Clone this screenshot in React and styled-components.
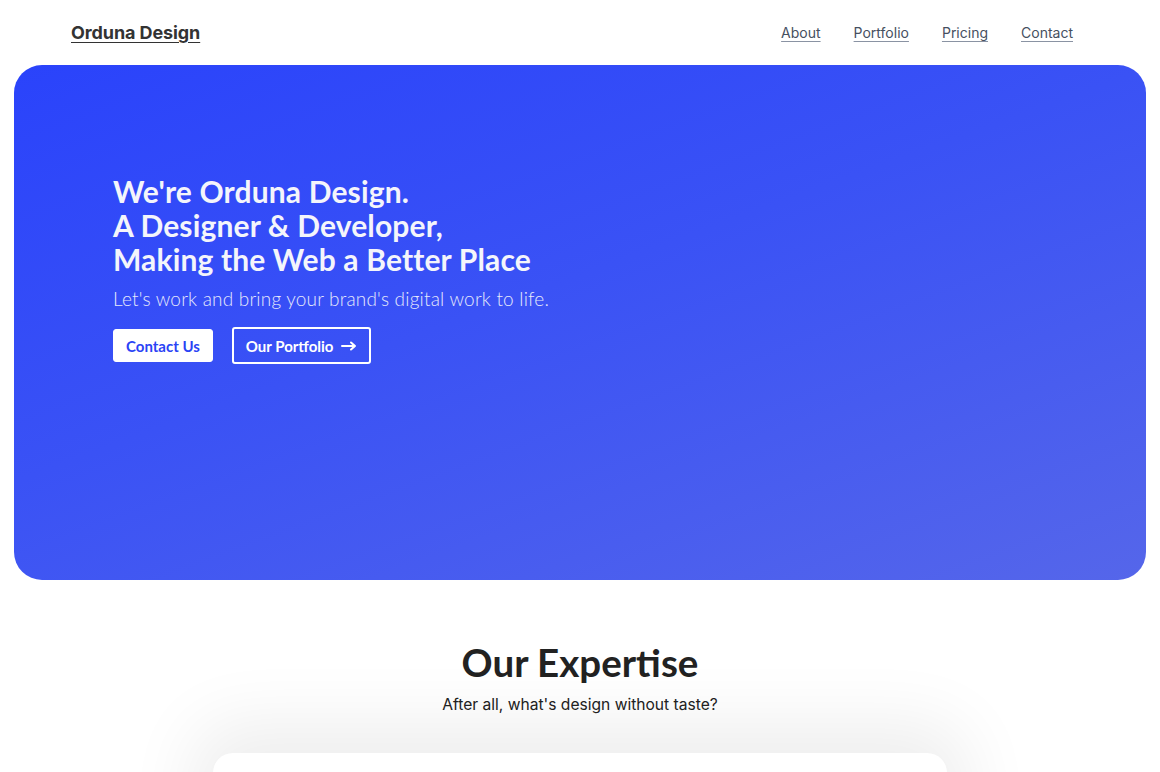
import React from 'react'
import styled, { createGlobalStyle } from 'styled-components'

const GlobalStyle = createGlobalStyle`
    html, body {
        margin: 0;
        padding: 0;
        background: #fff;
        font-family: Inter, "Liberation Sans", sans-serif;
    }
    body {
        overflow: hidden;
    }
`

const Page = styled.div`
    width: 1160px;
    min-height: 772px;
`

const Header = styled.header`
    height: 65px;
    display: flex;
    align-items: center;
    justify-content: space-between;
    padding: 0 87px 0 71px;
    box-sizing: border-box;
`

const Logo = styled.a`
    font-family: Inter, "Liberation Sans", sans-serif;
    font-size: 18px;
    font-weight: 700;
    color: #333;
    text-decoration: underline;
    text-underline-offset: 3px;
    letter-spacing: -0.1px;
`

const Nav = styled.nav`
    display: flex;
    gap: 33px;
`

const NavLink = styled.a`
    font-size: 14px;
    color: #46505f;
    text-decoration: underline;
    text-underline-offset: 3px;
    text-decoration-color: #8a93a3;
`

const Hero = styled.section`
    margin: 0 14px;
    height: 515px;
    border-radius: 28px;
    background: linear-gradient(160deg, #2a43fb 0%, #3a52f5 45%, #5566ea 100%);
    display: flex;
    flex-direction: column;
    justify-content: flex-start;
    padding: 109px 0 0 99px;
    box-sizing: border-box;
    color: #fff;
`

const Headline = styled.h1`
    margin: 0;
    font-family: Lato, "Liberation Sans", sans-serif;
    font-size: 30px;
    line-height: 34px;
    font-weight: 700;
    color: #f4f5fb;
    letter-spacing: 0.15px;
`

const Lead = styled.p`
    margin: 11px 0 17px;
    font-family: Lato, "Liberation Sans", sans-serif;
    font-size: 19px;
    font-weight: 300;
    color: #e6e9fb;
    letter-spacing: 0.2px;
`

const Actions = styled.div`
    display: flex;
    align-items: center;
    gap: 19px;
`

const Button = styled.a`
    display: inline-flex;
    align-items: center;
    gap: 8px;
    box-sizing: border-box;
    font-family: Lato, "Liberation Sans", sans-serif;
    font-weight: 700;
    font-size: 15px;
    border-radius: 3px;
    cursor: pointer;
    ${ ({ outline }) => outline ? `
        height: 37px;
        padding: 0 12px;
        border: 2px solid #fff;
        color: #fff;
        background: transparent;
    ` : `
        height: 33px;
        padding: 0 12px;
        background: #fff;
        color: #2a43f5;
        border: 1px solid #fff;
    ` }
`

const Expertise = styled.section`
    display: flex;
    flex-direction: column;
    align-items: center;
    padding-top: 58px;
`

const Title = styled.h2`
    margin: 0;
    font-family: Lato, "Liberation Sans", sans-serif;
    font-size: 38.5px;
    font-weight: 700;
    color: #222;
    line-height: 48px;
`

const Subtitle = styled.p`
    margin: 9px 0 0;
    font-size: 15.6px;
    color: #222;
`

const Card = styled.div`
    margin-top: 39px;
    width: 734px;
    height: 120px;
    background: #fff;
    border-radius: 20px;
    box-shadow: 0 -10px 70px 20px rgba(0, 0, 0, 0.07);
`

const Arrow = () => (
    <svg width="16" height="10" viewBox="0 0 16 10" fill="none">
        <path d="M1 5h13M10 1.5 14 5l-4 3.5" stroke="#fff" strokeWidth="2" strokeLinecap="round" strokeLinejoin="round" />
    </svg>
)

export default function App() {
    return (
        <Page>
            <GlobalStyle />
            <Header>
                <Logo>Orduna Design</Logo>
                <Nav>
                    <NavLink>About</NavLink>
                    <NavLink>Portfolio</NavLink>
                    <NavLink>Pricing</NavLink>
                    <NavLink>Contact</NavLink>
                </Nav>
            </Header>
            <Hero>
                <Headline>
                    We're Orduna Design.<br />
                    A Designer &amp; Developer,<br />
                    Making the Web a Better Place
                </Headline>
                <Lead>Let's work and bring your brand's digital work to life.</Lead>
                <Actions>
                    <Button>Contact Us</Button>
                    <Button outline>Our Portfolio <Arrow /></Button>
                </Actions>
            </Hero>
            <Expertise>
                <Title>Our Expertise</Title>
                <Subtitle>After all, what's design without taste?</Subtitle>
                <Card />
            </Expertise>
        </Page>
    )
}
